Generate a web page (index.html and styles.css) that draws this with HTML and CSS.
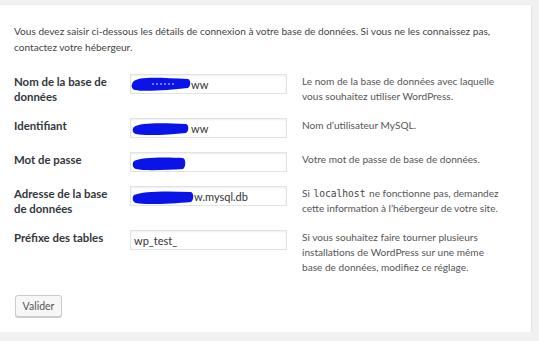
FILE: index.html
```html
<!DOCTYPE html>
<html lang="fr">
<head>
  <meta charset="UTF-8" />
  <title>Configuration de WordPress</title>
  <link rel="stylesheet" href="styles.css">
</head>
<body>

  <!-- Database setup card -->
  <form class="setup" method="post">
    <p class="intro">Vous devez saisir ci-dessous les détails de connexion à votre base de données. Si vous ne les connaissez pas, contactez votre hébergeur.</p>

    <table class="form-table">
      <tr>
        <th><label for="dbname">Nom de la base de données</label></th>
        <td class="field">
          <input id="dbname" class="masked" type="text" value="ww" />
          <svg class="scribble" width="70" height="20" viewBox="0 0 70 20">
            <path d="M3 8 C8 2 30 4 58 5 C61 6 61 12 58 14 C40 16 14 18 5 16 C1 15 1 11 3 8 Z" fill="#0a14e8"/>
            <path d="M22 10 L46 10" stroke="#dfe3ff" stroke-width="1" stroke-dasharray="2 2"/>
          </svg>
        </td>
        <td class="desc">Le nom de la base de données avec laquelle vous souhaitez utiliser WordPress.</td>
      </tr>
      <tr>
        <th><label for="uname">Identifiant</label></th>
        <td class="field">
          <input id="uname" class="masked" type="text" value="ww" />
          <svg class="scribble" width="70" height="20" viewBox="0 0 70 20">
            <path d="M4 9 C10 4 35 5 56 6 C59 7 59 13 56 15 C38 17 14 18 6 16 C2 15 2 11 4 9 Z" fill="#0a14e8"/>
          </svg>
        </td>
        <td class="desc">Nom d’utilisateur MySQL.</td>
      </tr>
      <tr>
        <th><label for="pwd">Mot de passe</label></th>
        <td class="field">
          <input id="pwd" type="text" value="" />
          <svg class="scribble" width="70" height="20" viewBox="0 0 70 20">
            <path d="M4 9 C10 5 36 5 53 6 C56 7 56 15 53 17 C36 18 14 19 6 17 C2 16 2 11 4 9 Z" fill="#0a14e8"/>
          </svg>
        </td>
        <td class="desc">Votre mot de passe de base de données.</td>
      </tr>
      <tr>
        <th><label for="dbhost">Adresse de la base de données</label></th>
        <td class="field">
          <input id="dbhost" class="masked masked-wide" type="text" value="w.mysql.db" />
          <svg class="scribble" width="70" height="20" viewBox="0 0 70 20">
            <path d="M4 9 C12 5 38 5 61 6 C64 7 64 14 61 16 C40 18 14 19 6 17 C2 16 2 11 4 9 Z" fill="#0a14e8"/>
          </svg>
        </td>
        <td class="desc">Si <code>localhost</code> ne fonctionne pas, demandez cette information à l’hébergeur de votre site.</td>
      </tr>
      <tr>
        <th><label for="prefix">Préfixe des tables</label></th>
        <td class="field">
          <input id="prefix" type="text" value="wp_test_" />
        </td>
        <td class="desc">Si vous souhaitez faire tourner plusieurs installations de WordPress sur une même base de données, modifiez ce réglage.</td>
      </tr>
    </table>

    <button type="submit" class="button">Valider</button>
  </form>

</body>
</html>
```
FILE: styles.css
```css
/* Page background and base font */
* { box-sizing: border-box; }
body {
  margin: 0;
  background: #f1f1f1;
  font-family: Lato, sans-serif;
  font-size: 10.1px;
  color: #444;
}

/* White card, its left edge runs off the screen */
.setup {
  margin: 5px 8px 0 -20px;
  padding: 18px 20px 15px 34px;
  background: #fff;
  box-shadow: 0 1px 3px rgba(0, 0, 0, 0.13);
}

.intro {
  margin: 0 0 12px;
  line-height: 16px;
}

/* Field rows */
.form-table {
  border-collapse: collapse;
}

.form-table th,
.form-table td {
  padding: 7px 0;
  vertical-align: top;
  text-align: left;
  line-height: 15px;
}

.form-table th {
  width: 116px;
  padding-right: 12px;
  font-size: 11.4px;
  font-weight: bold;
  color: #32373c;
}

.field {
  position: relative;
  width: 172px;
}

.field input {
  display: block;
  width: 157px;
  height: 20px;
  margin: 0;
  padding: 0 3px;
  border: 1px solid #e2e2e2;
  box-shadow: inset 0 1px 2px rgba(0, 0, 0, 0.07);
  font-family: Lato, sans-serif;
  font-size: 11px;
  color: #333;
  background: #fff;
}

.field input.masked { padding-left: 60px; }
.field input.masked-wide { padding-left: 63px; }

/* Blue pen marks hiding the values */
.scribble {
  position: absolute;
  left: 0;
  top: 7px;
}

.desc {
  width: 200px;
  color: #555;
}

.desc code {
  margin: 0 1px;
  font-family: "DejaVu Sans Mono", monospace;
  font-size: 9.6px;
  line-height: 1;
  color: #444;
}

.button {
  display: block;
  margin: 13px 0 0 1px;
  width: 47px;
  height: 22px;
  padding: 0;
  border: 1px solid #ccc;
  border-radius: 3px;
  background: #f7f7f7;
  box-shadow: 0 1px 0 #ccc;
  font-family: Lato, sans-serif;
  font-size: 10.5px;
  color: #555;
}
```
